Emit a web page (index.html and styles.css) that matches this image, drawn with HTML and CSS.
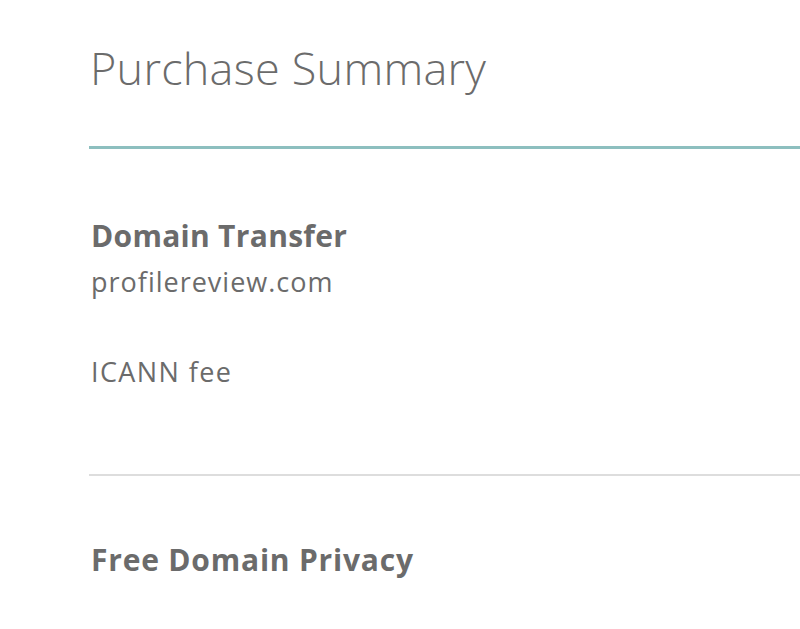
FILE: index.html
```html
<!DOCTYPE html>
<html>
<head>
<meta charset="utf-8">
<link rel="stylesheet" href="styles.css">
</head>
<body>
<div class="summary">
  <h1 class="title">Purchase Summary</h1>
  <div class="rule-teal"></div>
  <div class="section">
    <div class="item-name">Domain Transfer</div>
    <div class="item-sub">profilereview.com</div>
    <div class="item-fee">ICANN fee</div>
  </div>
  <div class="rule-gray"></div>
  <div class="section2">
    <div class="item-name wide">Free Domain Privacy</div>
  </div>
</div>
</body>
</html>
```
FILE: styles.css
```css
html, body {
  margin: 0;
  padding: 0;
  background: #ffffff;
}
body {
  font-family: "Open Sans", Lato, sans-serif;
  color: #6b6b6b;
  overflow: hidden;
}
.summary {
  padding-left: 89px;
}
.title {
  margin: 0;
  padding-top: 38px;
  font-size: 45px;
  font-weight: 300;
  line-height: 60px;
  letter-spacing: 0.25px;
  padding-left: 1px;
}
.rule-teal {
  margin-top: 48px;
  height: 3px;
  background: #8dbfbf;
}
.section {
  padding-top: 69px;
  padding-left: 2px;
  padding-bottom: 84px;
}
.item-name {
  font-size: 30px;
  font-weight: 700;
  line-height: 36px;
  letter-spacing: 0.3px;
}
.item-name.wide {
  letter-spacing: 0.8px;
}
.item-sub {
  font-size: 27px;
  font-weight: 400;
  line-height: 36px;
  margin-top: 10px;
  letter-spacing: 1px;
}
.item-fee {
  font-size: 27px;
  line-height: 36px;
  margin-top: 54px;
  letter-spacing: 1.4px;
}
.rule-gray {
  height: 2px;
  background: #dddddd;
}
.section2 {
  padding-top: 66px;
  padding-left: 2px;
}
```
